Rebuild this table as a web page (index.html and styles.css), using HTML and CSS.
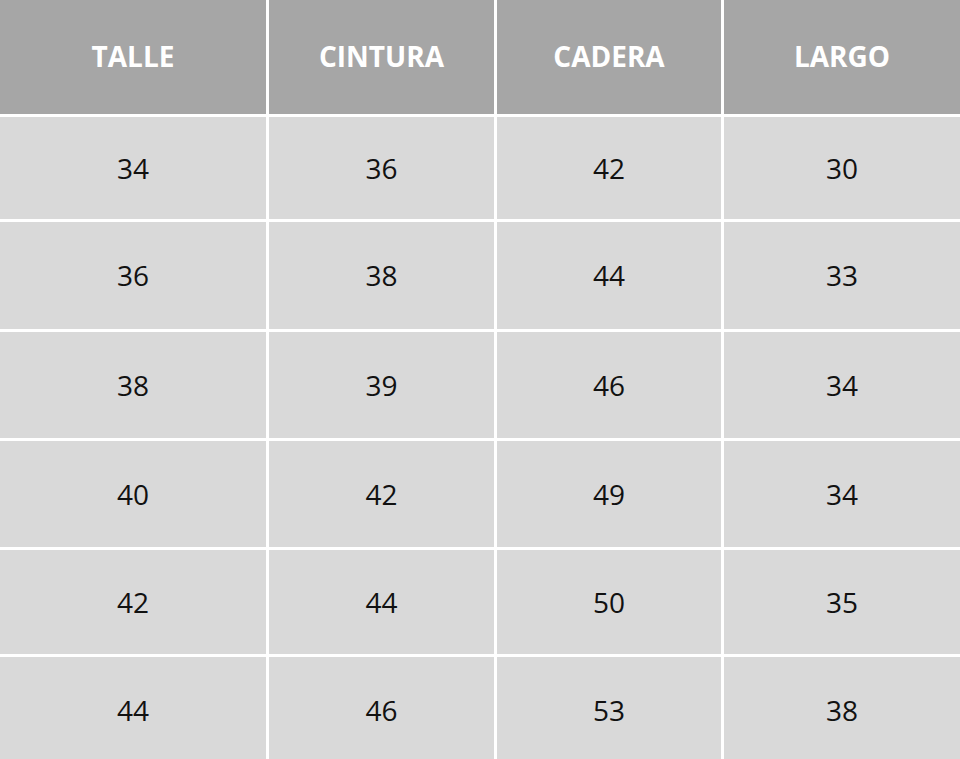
FILE: index.html
```html
<!DOCTYPE html>
<html lang="es">
<head>
<meta charset="utf-8">
<title>Tabla de talles</title>
<link rel="stylesheet" href="styles.css">
</head>
<body>
<div class="size-table">
  <div class="cell head">TALLE</div>
  <div class="cell head">CINTURA</div>
  <div class="cell head">CADERA</div>
  <div class="cell head">LARGO</div>

  <div class="cell">34</div><div class="cell">36</div><div class="cell">42</div><div class="cell">30</div>
  <div class="cell">36</div><div class="cell">38</div><div class="cell">44</div><div class="cell">33</div>
  <div class="cell">38</div><div class="cell">39</div><div class="cell">46</div><div class="cell">34</div>
  <div class="cell">40</div><div class="cell">42</div><div class="cell">49</div><div class="cell">34</div>
  <div class="cell">42</div><div class="cell">44</div><div class="cell">50</div><div class="cell">35</div>
  <div class="cell">44</div><div class="cell">46</div><div class="cell">53</div><div class="cell">38</div>
</div>
</body>
</html>
```
FILE: styles.css
```css
html, body {
  margin: 0;
  padding: 0;
  background: #ffffff;
  overflow: hidden;
}

.size-table {
  display: grid;
  grid-template-columns: 266px 225px 224px 1fr;
  grid-template-rows: 114px 102px 107px 106px 106px 104px 106px;
  gap: 3px;
  width: 960px;
  font-family: "Open Sans", "Liberation Sans", sans-serif;
}

.cell {
  display: flex;
  align-items: center;
  justify-content: center;
  background: #d9d9d9;
  color: #111111;
  font-size: 28px;
  font-weight: 400;
  padding-bottom: 1px;
}

.cell.head {
  background: #a6a6a6;
  color: #ffffff;
  font-weight: 700;
  padding-bottom: 3px;
}
```
